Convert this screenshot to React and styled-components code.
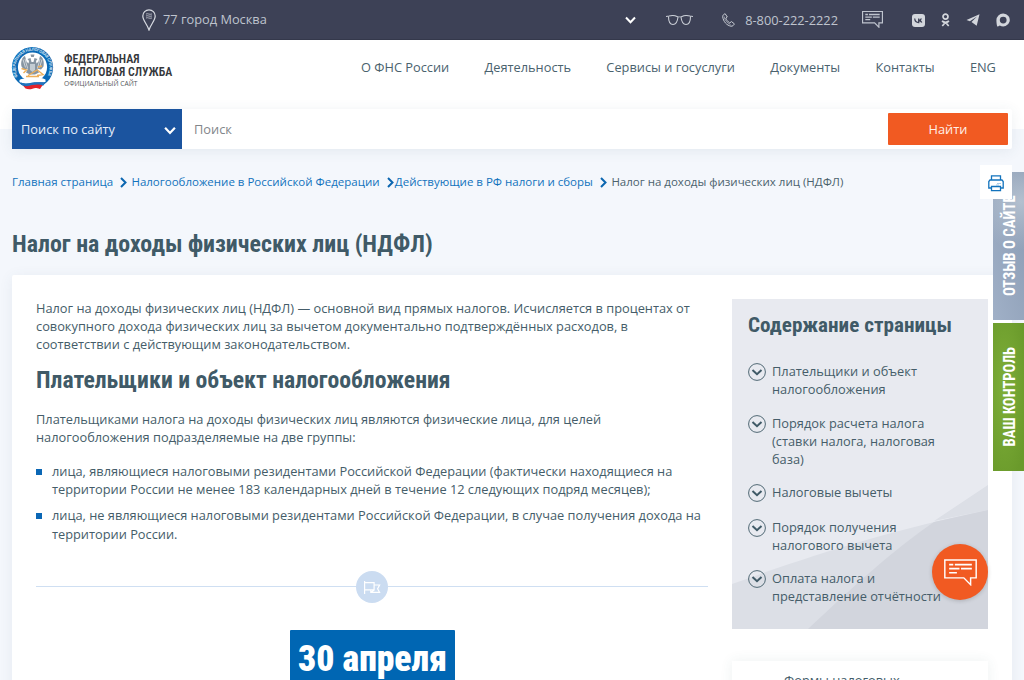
import React from "react";
import styled, { createGlobalStyle } from "styled-components";

const Global = createGlobalStyle`
  * { box-sizing: border-box; }
  html, body { margin: 0; height: 680px; overflow: hidden; }
  body {
    background: linear-gradient(#fff 129px, #f4f7fc 129px);
    font-family: "Open Sans", "Noto Sans", sans-serif;
    font-size: 12.8px;
    line-height: 18.2px;
    color: #455d69;
  }
`;

const Page = styled.div`
  position: relative;
  width: 1024px;
  height: 680px;
  overflow: hidden;
`;

const TopBar = styled.div`
  height: 40px;
  display: flex;
  align-items: center;
  background: #3d4156;
  border-bottom: 1px solid #34384b;
  color: #bfc4ce;
  padding: 0 14px 0 142px;
`;
const Region = styled.div`
  display: flex;
  align-items: center;
  gap: 7px;
  flex: 1;
`;
const Glasses = styled.svg`
  margin: 2px 0 0 30px;
`;
const Phone = styled.div`
  display: flex;
  align-items: center;
  gap: 10px;
  margin: 2px 24px 0 29px;
`;
const Social = styled.div`
  display: flex;
  align-items: center;
  gap: 16px;
  margin-left: 29px;
  padding-top: 1px;
`;

const Header = styled.header`
  height: 69px;
  display: flex;
  padding: 5px 28px 0 11px;
`;
const Brand = styled.div`
  display: flex;
  gap: 10px;
  width: 350px;
`;
const BrandText = styled.div`
  padding-top: 7px;
  color: #36383c;
`;
const Squeeze = styled.span`
  display: inline-block;
  white-space: nowrap;
  font-family: Roboto, sans-serif;
  font-stretch: 75%;
  font-weight: ${(p) => p.$weight || 700};
  transform: scaleX(${(p) => p.$x});
  transform-origin: left;
`;
const BrandLine = styled.div`
  font-size: 13px;
  line-height: 13px;
`;
const BrandNote = styled.div`
  font-size: 6.7px;
  line-height: 11px;
  white-space: nowrap;
  color: #55585c;
`;
const Nav = styled.nav`
  flex: 1;
  display: flex;
  justify-content: space-between;
  padding-top: 13px;
  white-space: nowrap;
  color: #4a626e;
`;

const Search = styled.div`
  display: flex;
  height: 40px;
  margin: 0 12px;
  background: #fff;
  border-radius: 2px;
  box-shadow: 0 2px 14px rgba(60, 90, 110, 0.09);
`;
const Scope = styled.div`
  width: 170px;
  background: #1b549f;
  color: #e4edf8;
  display: flex;
  align-items: center;
  justify-content: space-between;
  padding: 1px 6px 0 9px;
`;
const Query = styled.div`
  flex: 1;
  padding-left: 12px;
  line-height: 40px;
  color: #82868a;
`;
const Submit = styled.div`
  width: 120px;
  height: 32px;
  margin: 4px;
  background: #f15a22;
  color: #fff0e8;
  border-radius: 1px;
  line-height: 32px;
  text-align: center;
`;

const Crumbs = styled.div`
  display: flex;
  align-items: center;
  height: 18px;
  margin: 24px 12px 0;
  font-size: 11.5px;
  white-space: nowrap;
  color: #4b626d;
`;
const Crumb = styled.span`
  color: #1273bd;
`;
const CrumbArrow = styled.svg`
  flex: none;
  margin: 1px ${(p) => p.$right}px 0 7px;
`;
const Title = styled.h1`
  margin: 36px 12px 0;
  height: 48px;
  font-size: 24px;
  line-height: 32px;
  color: #405a67;
`;
const Card = styled.div`
  display: flex;
  gap: 24px;
  height: 460px;
  margin: 0 12px;
  padding: 24px;
  background: #fff;
  border-radius: 2px;
  box-shadow: 0 2px 14px rgba(60, 90, 110, 0.08);
`;
const Article = styled.main`
  width: 672px;
`;
const Text = styled.p`
  margin: 0;
  white-space: nowrap;
`;
const Heading = styled.h2`
  margin: 9px 0 14px;
  font-size: 24px;
  line-height: 32px;
  color: #405a67;
`;
const List = styled.ul`
  list-style: none;
  margin: 16px 0 0;
  padding: 0;
`;
const Item = styled.li`
  display: flex;
  gap: 10px;
  margin-bottom: 8px;
  white-space: nowrap;
  &::before {
    content: "";
    flex: none;
    width: 6px;
    height: 6px;
    margin-top: 7px;
    background: #0b67b5;
  }
`;
const Divider = styled.div`
  display: flex;
  align-items: center;
  height: 32px;
  margin-top: 28px;
  &::before, &::after {
    content: "";
    flex: 1;
    height: 1px;
    background: #cfdff2;
  }
`;
const DateBadge = styled.div`
  width: 165px;
  height: 60px;
  margin: 27px auto 0;
  background: #0066b3;
  color: #fff;
  border-radius: 1px;
  padding-left: 8px;
  font-size: 37px;
  line-height: 54px;
`;

const Side = styled.aside`
  width: 256px;
`;
const Contents = styled.div`
  position: relative;
  height: 330px;
  background: #e8eaf0;
  padding: 8px 16px;
`;
const Facets = styled.svg`
  position: absolute;
  left: 0;
  bottom: 0;
`;
const ContentsInner = styled.div`
  position: relative;
`;
const SideTitle = styled.h3`
  margin: 0 0 20px;
  font-size: 21px;
  line-height: 34px;
  color: #405a67;
`;
const Entry = styled.div`
  display: flex;
  gap: 6px;
  margin-bottom: 15.2px;
  white-space: nowrap;
`;
const EntryIcon = styled.svg`
  flex: none;
  margin-top: 1px;
`;
const FormsCard = styled.div`
  margin-top: 32px;
  height: 60px;
  padding: 10px 0 0 52px;
  background: #fff;
  box-shadow: 0 0 12px rgba(60, 100, 100, 0.09);
`;

const PrintButton = styled.div`
  position: absolute;
  left: 980px;
  top: 165px;
  width: 32px;
  height: 34px;
  background: #fff;
  display: flex;
  align-items: center;
  justify-content: center;
  padding-top: 2px;
`;
const Ribbon = styled.div`
  position: absolute;
  left: 993px;
  top: ${(p) => p.$top}px;
  width: 31px;
  height: 148px;
  padding-left: 2px;
  background: ${(p) => p.$bg};
  color: #fff;
  display: flex;
  align-items: center;
  justify-content: center;
`;
const RibbonText = styled.span`
  writing-mode: vertical-rl;
  font-family: Roboto, sans-serif;
  font-size: 16px;
  font-stretch: 75%;
  font-weight: 700;
  line-height: 20px;
  white-space: nowrap;
  transform: rotate(180deg) scaleY(${(p) => p.$y});
`;
const ChatButton = styled.div`
  position: absolute;
  left: 932px;
  top: 544px;
  width: 56px;
  height: 56px;
  border-radius: 50%;
  background: #f15a22;
  color: #fff;
  box-shadow: 0 1px 4px rgba(0, 0, 0, 0.18);
  display: flex;
  align-items: center;
  justify-content: center;
`;

const Chevron = ({ size = 11, color = "#fff" }) => (
  <svg width={size} height={size} viewBox="0 0 11 11" fill="none" stroke={color} strokeWidth="2">
    <path d="M1 3.500l4.500 4.700L10 3.500" />
  </svg>
);

const Arrow = ({ right }) => (
  <CrumbArrow $right={right} width="7" height="11" viewBox="0 0 7 11" fill="none" stroke="#0b66b0" strokeWidth="2">
    <path d="M1 1l4.500 4.500L1 10" />
  </CrumbArrow>
);

const Bubble = ({ width, height, stroke = 1.4 }) => (
  <svg width={width} height={height} viewBox="0 0 32 26" fill="none" stroke="currentColor" strokeWidth={stroke}>
    <path d="M.8.8h30.4v17.4h-5.4v6.6l-6.6-6.6H.8z" />
    <path d="M5 5.300h4M10.500 5.300h16.500M5 9.300h10M16.500 9.300h10.500M5 13.200h7.500" strokeWidth={stroke * 1.15} />
  </svg>
);

const Circled = () => (
  <EntryIcon width="18" height="18" viewBox="0 0 18 18" fill="none" stroke="#405a67">
    <circle cx="9" cy="9" r="8.400" strokeWidth=".9" />
    <path d="M4.500 7l4.500 4.200L13.500 7" strokeWidth="2" />
  </EntryIcon>
);

const Emblem = () => (
  <svg width="43" height="45" viewBox="0 0 43 45">
    <defs>
      <path id="ring" d="M8.700 34A17 17 0 1 1 34.300 34" />
    </defs>
    <circle cx="21.500" cy="22.500" r="20.600" fill="#0b69b5" />
    <circle cx="21.500" cy="22" r="14.600" fill="#fff" />
    <text fontFamily="Roboto, sans-serif" fontSize="4.200" fontWeight="700" fill="#c9e0f2">
      <textPath href="#ring" startOffset="3" textLength="70">ФЕДЕРАЛЬНАЯ НАЛОГОВАЯ СЛУЖБА</textPath>
    </text>
    <g fill="#8795a2">
      <path d="M20.500 17l-1-4-3 1 1.500 2-.5 2.500-2-2-1.500-5.500c-3 1-4.500 6-3.500 10.500l2.500 3 4-1-2 4 4 2h5l4-2-2-4 4 1 2.500-3c1-4.500-.5-9.500-3.500-10.500L27.500 16.500l-2 2-.5-2.500 1.500-2-3-1-1 4z" />
      <path d="M19.500 9.500h4l-.7 2.500h-2.600z" />
    </g>
    <path d="M12 14.500l2.500 8M14 14l2.500 9M31 14.500l-2.500 8M29 14l-2.500 9" stroke="#fff" strokeWidth=".6" />
    <path d="M19 19h5v6l-2.500 2-2.500-2z" fill="#c3ccd3" />
    <path d="M10.500 23.500l5 1.500-3 3M17 30.500l10-6M27 25.500l5 4-6 1M15 31.500h13M27 22l4-1" fill="none" stroke="#eeae58" strokeWidth="1.400" />
    <path d="M8.500 35c4.500-2.500 8 0 13-1s8-2 13 .5v2.500c-5 1-8-.5-13 .5s-9 1.500-13-.5z" fill="#fff" />
    <path d="M10 37.500c4 2 8 1 12 .5s8-1.500 11.500 0l-1 2.500c-4-1-7-1-10.500 0s-8 1-11-.5z" fill="#2373bd" />
    <path d="M12 40.500c4 1.500 6.500 0 9.500-.5s7-1 10 .3l-2.500 3.600c-4-1-5-1-7.500-.2s-5 .7-7-.3z" fill="#e3242b" />
  </svg>
);

const entries = [
  ["Плательщики и объект", "налогообложения"],
  ["Порядок расчета налога", "(ставки налога, налоговая", "база)"],
  ["Налоговые вычеты"],
  ["Порядок получения", "налогового вычета"],
  ["Оплата налога и", "представление отчётности"],
];

const Lines = ({ rows }) => (
  <div>
    {rows.map((r) => (
      <div key={r}>{r}</div>
    ))}
  </div>
);

export default function App() {
  return (
    <Page>
      <Global />
      <TopBar>
        <Region>
          <svg width="14" height="22" viewBox="0 0 14 22" fill="none" stroke="#d8dbe2" strokeWidth="1.200">
            <path d="M7 21C5 15 .8 11.500.8 7a6.200 6.200 0 0 1 12.400 0C13.200 11.500 9 15 7 21z" />
            <path d="M4 5c2-1 3 1 6 0M4 7c2-1 3 1 6 0M4 9c2-1 3 1 6 0" strokeWidth=".7" />
          </svg>
          <span>77 город Москва</span>
        </Region>
        <Chevron />
        <Glasses width="27" height="12" viewBox="0 0 27 12" fill="none" stroke="#c9cdd5" strokeWidth="1.100">
          <path d="M0 1.500l3-.5c3-.7 6-.5 8 .4 1 .5 4 .5 5 0 2-.9 5-1.100 8-.4l3 .5M2.500 1.500c0 5 1 8 4.500 8s4.500-3 5-7.500M24.500 1.500c0 5-1 8-4.500 8s-4.500-3-5-7.500" />
        </Glasses>
        <Phone>
          <svg width="13" height="14" viewBox="0 0 13 14" fill="none" stroke="#c9cdd5">
            <path d="M3.200.8C1.800 1 .6 2.300.7 3.800c.5 4.500 4 8.700 8.300 9.400 1.500.2 3-1 3.300-2.400L9.500 8.600 7.700 9.900C5.700 8.600 4.500 7 3.800 5.200L5.300 4z" />
            <path d="M2.200 3.500c.3 3.500 2.800 6.500 6.300 8" strokeWidth=".6" />
          </svg>
          <span>8-800-222-2222</span>
        </Phone>
        <Bubble width={21} height={17} stroke={1.8} />
        <Social>
          <svg width="13" height="13" viewBox="0 0 13 13">
            <rect width="13" height="13" rx="3" fill="#d3d6dc" />
            <path d="M2.700 4.500c.2 2.500 1.500 4 4 4V4.500M6.800 6.500c1.200 0 2-.7 2.600-2M6.800 6.500c1.500 0 2.400.8 3 2" fill="none" stroke="#3d4156" strokeWidth="1.300" />
          </svg>
          <svg width="9" height="14" viewBox="0 0 9 14" fill="none" stroke="#d3d6dc" strokeWidth="1.700">
            <circle cx="4.500" cy="3.600" r="2.500" />
            <path d="M1 8c2 1.500 5 1.500 7 0M4.500 9.300L1.300 13M4.500 9.300L7.700 13" />
          </svg>
          <svg width="14" height="12" viewBox="0 0 13 12" fill="#d3d6dc">
            <path d="M13 .3L0 6l3.400 1.300L10.500 2.500 5 8l5.200 3.700z" />
          </svg>
          <svg width="14" height="14" viewBox="0 0 14 14" fill="#d3d6dc" fillRule="evenodd">
            <path d="M7.200.5a6.500 6.500 0 1 1-3.400 12c-.8.700-1.700 1-2.600 1C.8 12 .4 9.500.4 7.200A6.700 6.700 0 0 1 7.200.5zM7.200 3.700a3.400 3.400 0 1 0 0 6.800 3.400 3.400 0 0 0 0-6.800z" />
          </svg>
        </Social>
      </TopBar>

      <Header>
        <Brand>
          <Emblem />
          <BrandText>
            <BrandLine><Squeeze $x={0.915} $weight={600}>ФЕДЕРАЛЬНАЯ</Squeeze></BrandLine>
            <BrandLine><Squeeze $x={0.91} $weight={600}>НАЛОГОВАЯ СЛУЖБА</Squeeze></BrandLine>
            <BrandNote>ОФИЦИАЛЬНЫЙ САЙТ</BrandNote>
          </BrandText>
        </Brand>
        <Nav>
          <span>О ФНС России</span>
          <span>Деятельность</span>
          <span>Сервисы и госуслуги</span>
          <span>Документы</span>
          <span>Контакты</span>
          <span>ENG</span>
        </Nav>
      </Header>

      <Search>
        <Scope>Поиск по сайту<Chevron size={12} /></Scope>
        <Query>Поиск</Query>
        <Submit>Найти</Submit>
      </Search>

      <Crumbs>
        <Crumb>Главная страница</Crumb><Arrow right={4.3} />
        <Crumb>Налогообложение в Российской Федерации</Crumb><Arrow right={1.3} />
        <Crumb>Действующие в РФ налоги и сборы</Crumb><Arrow right={4.5} />
        <span>Налог на доходы физических лиц (НДФЛ)</span>
      </Crumbs>
      <Title><Squeeze $x={0.996}>Налог на доходы физических лиц (НДФЛ)</Squeeze></Title>

      <Card>
        <Article>
          <Text>
            Налог на доходы физических лиц (НДФЛ) — основной вид прямых налогов. Исчисляется в процентах от<br />
            совокупного дохода физических лиц за вычетом документально подтверждённых расходов, в<br />
            соответствии с действующим законодательством.
          </Text>
          <Heading><Squeeze $x={0.987}>Плательщики и объект налогообложения</Squeeze></Heading>
          <Text>
            Плательщиками налога на доходы физических лиц являются физические лица, для целей<br />
            налогообложения подразделяемые на две группы:
          </Text>
          <List>
            <Item>
              <Lines rows={["лица, являющиеся налоговыми резидентами Российской Федерации (фактически находящиеся на", "территории России не менее 183 календарных дней в течение 12 следующих подряд месяцев);"]} />
            </Item>
            <Item>
              <Lines rows={["лица, не являющиеся налоговыми резидентами Российской Федерации, в случае получения дохода на", "территории России."]} />
            </Item>
          </List>
          <Divider>
            <svg width="32" height="32" viewBox="0 0 32 32" fill="none" stroke="#fff" strokeWidth="1.200">
              <circle cx="16" cy="16" r="16" fill="#cbdcf1" stroke="none" />
              <path d="M8.600 10v13M8.600 11.600h9.500v7.300H8.600M18.100 14h5.500l-2 3.700 2 3.700h-8.800v-2.500M14.800 21.400l3.300-2.500" />
            </svg>
          </Divider>
          <DateBadge><Squeeze $x={0.962} $weight={900}>30 апреля</Squeeze></DateBadge>
        </Article>
        <Side>
          <Contents>
            <Facets width="256" height="144" viewBox="0 0 256 144">
              <path d="M0 99C80 70 160 45 256 25V144H0z" fill="#dcdfe6" />
              <path d="M202 36L256 0v25z" fill="#dcdfe6" />
              <path d="M76 144C125 98 160 66 202 37L256 25v119z" fill="#d2d5dd" />
            </Facets>
            <ContentsInner>
              <SideTitle><Squeeze $x={1.007}>Содержание страницы</Squeeze></SideTitle>
              {entries.map((rows) => (
                <Entry key={rows[0]}><Circled /><Lines rows={rows} /></Entry>
              ))}
            </ContentsInner>
          </Contents>
          <FormsCard>Формы налоговых</FormsCard>
        </Side>
      </Card>

      <Ribbon $top={172} $bg="radial-gradient(circle at 90% 20%, #b3c0cf, transparent 40%), linear-gradient(75deg, #a0b0c7, #8a9bb3)">
        <RibbonText $y={0.92}>ОТЗЫВ О САЙТЕ</RibbonText>
      </Ribbon>
      <Ribbon $top={323} $bg="radial-gradient(ellipse at 35% 45%, #7eae38, #6a9a2b 85%)">
        <RibbonText $y={0.91}>ВАШ КОНТРОЛЬ</RibbonText>
      </Ribbon>
      <PrintButton>
        <svg width="16" height="17" viewBox="0 0 16 17" fill="none" stroke="#1273bd" strokeWidth="1.300">
          <path d="M3.500 5V.9h9V5M3.500 13H.8V6.500L2 5h12l1.200 1.500V13h-2.700M3.500 11.500h9v4.200h-9z" />
          <path d="M9 8.500h4M8 10h3" strokeWidth=".6" opacity=".6" />
        </svg>
      </PrintButton>
      <ChatButton><Bubble width={33} height={27} /></ChatButton>
    </Page>
  );
}
